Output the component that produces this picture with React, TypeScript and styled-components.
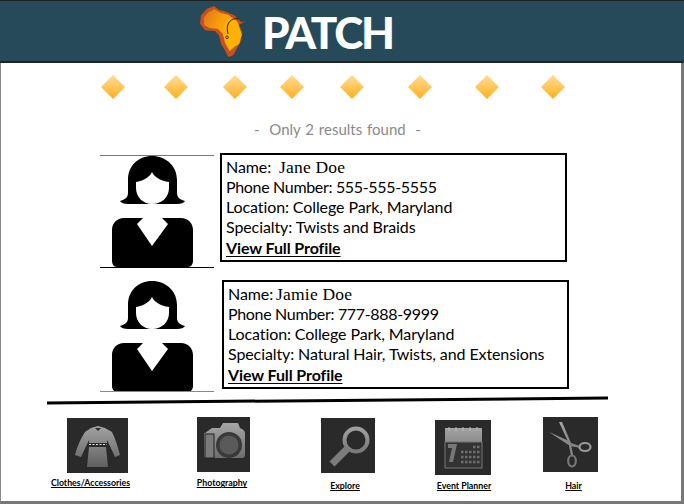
import React from "react";
import styled, { createGlobalStyle } from "styled-components";

const Global = createGlobalStyle`
  html, body { margin: 0; padding: 0; background: #fff; }
  body { font-family: "Lato", "Open Sans", sans-serif; color: #000; }
`;

const Page = styled.div`
  width: 684px;
  height: 504px;
  overflow: hidden;
  background: #fff;
`;

const Header = styled.header`
  box-sizing: border-box;
  height: 63px;
  background: #264a5a;
  border-top: 1px solid #222;
  border-bottom: 2px solid #222;
  display: flex;
  align-items: center;
  padding-left: 195px;
`;

const Logo = styled.svg`
  width: 60px;
  height: 58px;
  flex: none;
`;

const Title = styled.h1`
  margin: 2px 0 0 7px;
  font-family: "Lato", sans-serif;
  font-weight: 900;
  font-size: 44px;
  line-height: 58px;
  color: #fff;
  letter-spacing: -2.2px;
`;

const Main = styled.main`
  box-sizing: border-box;
  height: 441px;
  border-left: 1px solid #8a8a8a;
  border-right: 3px solid #777;
  border-bottom: 3px solid #777;
`;

const DiamondRow = styled.div`
  display: flex;
  padding: 12px 0 0 100px;
  height: 24px;
`;

const Diamond = styled.span<{ $gap: number }>`
  width: 24px;
  height: 24px;
  margin-left: ${(p) => p.$gap}px;
  clip-path: polygon(50% 0, 100% 50%, 50% 100%, 0 50%);
  background: linear-gradient(180deg, #ffdc9a 0%, #ffc65c 50%, #ffaf1a 100%);
`;

const Results = styled.p`
  margin: 19px 0 0;
  height: 35px;
  width: 673px;
  text-align: center;
  font-size: 15px;
  line-height: 22px;
  color: #8a8a8a;
  word-spacing: 1px;
`;

const Row = styled.section<{ $gap: number; $top: number }>`
  display: flex;
  align-items: flex-start;
  gap: ${(p) => p.$gap}px;
  margin: ${(p) => p.$top}px 0 0 99px;
`;

const Portrait = styled.div<{ $first?: boolean }>`
  box-sizing: border-box;
  width: 114px;
  height: ${(p) => (p.$first ? 113 : 112)}px;
  margin-top: ${(p) => (p.$first ? 2 : 0)}px;
  border-top: ${(p) => (p.$first ? "1px solid #777" : "none")};
  border-bottom: 1px solid ${(p) => (p.$first ? "#000" : "#888")};
  overflow: hidden;
`;

const PortraitArt = styled.svg<{ $raised?: boolean }>`
  display: block;
  width: 114px;
  height: 112px;
  margin-top: ${(p) => (p.$raised ? -1 : 0)}px;
`;

const Card = styled.div`
  box-sizing: border-box;
  width: 347px;
  height: 109px;
  border: 2px solid #000;
  padding: 2px 0 0 4px;
  font-size: 16px;
  line-height: 20px;
  letter-spacing: -0.1px;
  white-space: nowrap;
`;

const Line = styled.div`
  height: 20px;
`;

const PhoneLine = styled(Line)`
  letter-spacing: -0.33px;
`;

const ProfileLine = styled(Line)`
  margin-top: 1px;
`;

const SerifName = styled.span<{ $gap: number }>`
  font-family: "Liberation Serif", serif;
  font-size: 17.5px;
  letter-spacing: 0.2px;
  margin-left: ${(p) => p.$gap}px;
`;

const ProfileLink = styled.a`
  font-weight: 700;
  color: #000;
  text-decoration: underline;
  text-underline-offset: 2px;
`;

const Divider = styled.div`
  width: 561px;
  height: 3px;
  margin: 7px 0 0 46px;
  background: #000;
  transform: rotate(-0.5deg);
`;

const Nav = styled.nav`
  display: flex;
  height: 80px;
  margin-top: 15px;
`;

const NavItem = styled.a<{ $left: number; $width: number; $top: number; $labelGap: number }>`
  display: flex;
  flex-direction: column;
  align-items: center;
  flex: none;
  width: ${(p) => p.$width}px;
  margin-left: ${(p) => p.$left}px;
  padding-top: ${(p) => p.$top}px;
  gap: ${(p) => p.$labelGap}px;
  color: #000;
`;

const Tile = styled.svg<{ $w: number }>`
  display: block;
  width: ${(p) => p.$w}px;
  height: 55px;
  background: #2a2a2a;
`;

const NavLabel = styled.span<{ $shift: number }>`
  font-size: 8.8px;
  line-height: 9px;
  font-weight: 700;
  text-decoration: underline;
  white-space: nowrap;
  margin-left: ${(p) => p.$shift}px;
`;

const Avatar = ({ raised }: { raised?: boolean }) => (
  <PortraitArt viewBox="0 0 114 112" $raised={raised}>
    <path d="M52 1C38 1 28 11 28 25V38C28 43 24 45 20 46C21 48 24 49 28 49H77C81 49 84 48 85 46C81 45 77 43 77 38V25C77 11 66 1 52 1Z" fill="#000" />
    <path d="M52 17C50 22 43 26 36 27V33C36 42 43 49 52 49C62 49 69 42 69 33V27C61 26 54 22 52 17Z" fill="#fff" />
    <path d="M24 63H43L37 69L52 91L68 69L62 63H81C88 63 93 68 93 75V106C93 109 91 112 88 112H17C14 112 12 109 12 106V75C12 68 17 63 24 63Z" fill="#000" />
  </PortraitArt>
);

const Shade = ({ id }: { id: string }) => (
  <defs>
    <linearGradient id={id} gradientUnits="userSpaceOnUse" x1="0" y1="5" x2="0" y2="50">
      <stop offset="0" stopColor="#a8a8a8" />
      <stop offset="1" stopColor="#5e5e5e" />
    </linearGradient>
  </defs>
);

const items = [
  {
    label: "Clothes/Accessories", left: 66, width: 61, top: 1, labelGap: 5, shift: -14,
    art: (
      <>
        <Shade id="a" />
        <path d="M24 10L31 8L38 10L45 14C48 20 51 29 53 37L48 39L40 22V25H22V22L14 39L8 37C10 29 14 20 18 14Z" fill="url(#a)" />
        <path d="M28 10H34L31 13Z" fill="#2a2a2a" />
        <path d="M22 29H39L41 49H20Z" fill="url(#a)" />
        <path d="M22 26.500H40" stroke="#ddd" strokeWidth="1.200" strokeDasharray="2 1.500" />
      </>
    ),
  },
  {
    label: "Photography", left: 69, width: 53, top: 0, labelGap: 6, shift: -3,
    art: (
      <>
        <Shade id="b" />
        <path d="M8 16L15 11H23L26 6H41L43 11C46 12 48 14 48 16V38C48 40 47 41 45 41H8C7 41 7 40 7 39V17C7 16 7 16 8 16Z" fill="url(#b)" />
        <rect x="8" y="17" width="9" height="24" fill="#7a7a7a" stroke="#222" strokeWidth="1" />
        <circle cx="32" cy="28" r="13" fill="#3a3a3a" />
        <circle cx="32" cy="28" r="9.500" fill="#5a5a5a" />
      </>
    ),
  },
  {
    label: "Explore", left: 71, width: 54, top: 1, labelGap: 8, shift: -6,
    art: (
      <>
        <Shade id="c" />
        <circle cx="35" cy="22" r="11.500" fill="none" stroke="url(#c)" strokeWidth="4" />
        <path d="M26 31L11 46" stroke="#7c7c7c" strokeWidth="7" />
      </>
    ),
  },
  {
    label: "Event Planner", left: 60, width: 56, top: 3, labelGap: 6, shift: 2,
    art: (
      <>
        <Shade id="d" />
        <rect x="10" y="8" width="37" height="14" fill="url(#d)" />
        <path d="M14 7V11M21 7V11M28 7V11M35 7V11M42 7V11" stroke="#bbb" strokeWidth="1" />
        <rect x="10" y="22" width="37" height="26" fill="#333" stroke="#777" strokeWidth="1" />
        <path d="M13 24H22L18 42H14L17 28H13Z" fill="#777" />
        <path d="M26 32H45M26 37H45M26 42H45" stroke="#6e6e6e" strokeWidth="2.500" strokeDasharray="2.500 1.500" />
        <path d="M38 27H45" stroke="#6e6e6e" strokeWidth="2.500" strokeDasharray="2.500 1.500" />
      </>
    ),
  },
  {
    label: "Hair", left: 52, width: 55, top: 0, labelGap: 9, shift: 6,
    art: (
      <>
        <Shade id="e" />
        <path d="M16 5L19 5L28 26L37 29V31L27 29Z" fill="url(#e)" />
        <path d="M6 15L26 24L29 28L27 29Z" fill="url(#e)" />
        <ellipse cx="42" cy="30" rx="5.500" ry="4" fill="none" stroke="#999" strokeWidth="2.200" />
        <ellipse cx="29" cy="44" rx="3.800" ry="5.500" fill="none" stroke="#777" strokeWidth="2.200" />
        <path d="M27 28L29 38" stroke="#888" strokeWidth="2.200" />
      </>
    ),
  },
];

const gaps = [0, 39, 35, 33, 36, 44, 43, 42];

export default function App() {
  return (
    <Page>
      <Global />
      <Header>
        <Logo viewBox="0 0 180 174">
          <defs>
            <linearGradient id="af" x1="0" y1="0" x2="1" y2="0.6">
              <stop offset="0" stopColor="#e0701a" />
              <stop offset="0.45" stopColor="#f8a00a" />
              <stop offset="1" stopColor="#ffb800" />
            </linearGradient>
          </defs>
          <path d="M58 12L36 20L18 40L15 65L30 85L60 87L72 100L78 125L88 142L100 165L115 160L125 140L138 118L142 90L132 68L152 58L138 60L118 40L88 28L72 24Z" fill="#c8501a" />
          <path d="M58 22L38 32L26 48L28 70L44 78L68 80L84 96L90 122L104 148L118 134L132 124L140 100L126 60L100 38L76 32Z" fill="url(#af)" />
          <path d="M100 52C112 46 126 52 130 66L140 98L134 102L134 122L128 130L112 132L92 122L84 96L86 70Z" fill="#ffb000" />
          <path d="M97 84C95 62 108 48 130 50M97 84L99 96" fill="none" stroke="#2a1c0c" strokeWidth="3" />
          <circle cx="96" cy="106" r="4" fill="none" stroke="#2a1c0c" strokeWidth="2.500" />
        </Logo>
        <Title>PATCH</Title>
      </Header>
      <Main>
        <DiamondRow>
          {gaps.map((g, i) => (
            <Diamond key={i} $gap={g} />
          ))}
        </DiamondRow>
        <Results>-&nbsp; Only 2 results found &nbsp;-</Results>
        <Row $gap={6} $top={0}>
          <Portrait $first>
            <Avatar raised />
          </Portrait>
          <Card>
            <Line>Name: <SerifName $gap={4}>Jane Doe</SerifName></Line>
            <PhoneLine>Phone Number: 555-555-5555</PhoneLine>
            <Line>Location: College Park, Maryland</Line>
            <Line>Specialty: Twists and Braids</Line>
            <ProfileLine><ProfileLink>View Full Profile</ProfileLink></ProfileLine>
          </Card>
        </Row>
        <Row $gap={8} $top={12}>
          <Portrait>
            <Avatar />
          </Portrait>
          <Card>
            <Line>Name:<SerifName $gap={3}>Jamie Doe</SerifName></Line>
            <PhoneLine>Phone Number: 777-888-9999</PhoneLine>
            <Line>Location: College Park, Maryland</Line>
            <Line>Specialty: Natural Hair, Twists, and Extensions</Line>
            <ProfileLine><ProfileLink>View Full Profile</ProfileLink></ProfileLine>
          </Card>
        </Row>
        <Divider />
        <Nav>
          {items.map((it) => (
            <NavItem key={it.label} $left={it.left} $width={it.width} $top={it.top} $labelGap={it.labelGap}>
              <Tile $w={it.width} viewBox={`0 0 ${it.width} 55`}>{it.art}</Tile>
              <NavLabel $shift={it.shift}>{it.label}</NavLabel>
            </NavItem>
          ))}
        </Nav>
      </Main>
    </Page>
  );
}
